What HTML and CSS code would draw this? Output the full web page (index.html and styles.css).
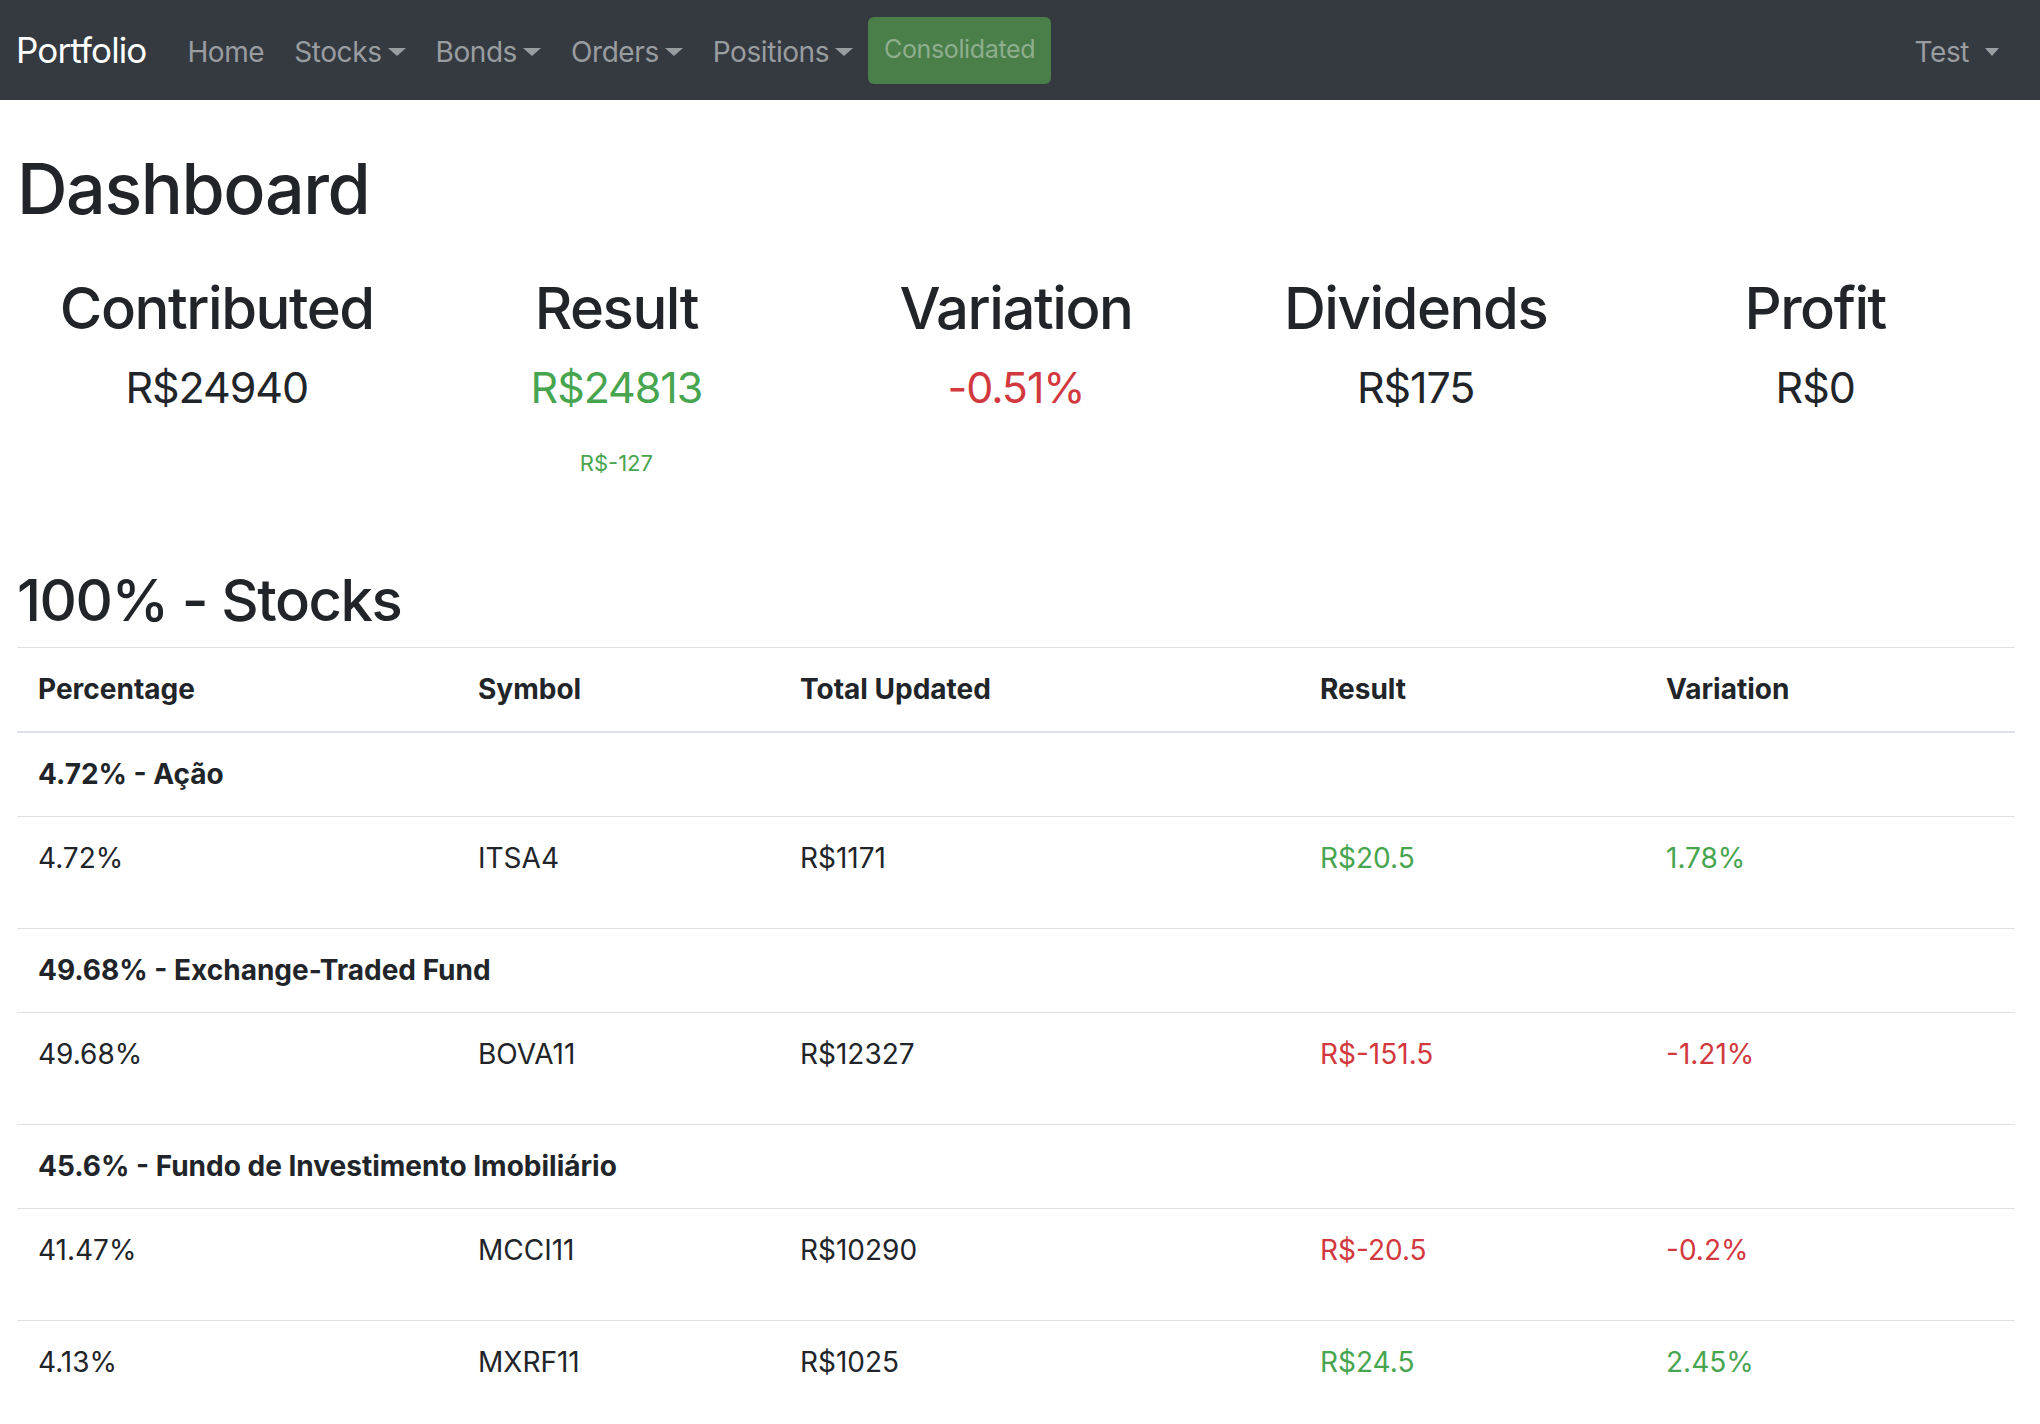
FILE: index.html
```html
<!DOCTYPE html>
<html lang="en">
<head>
<meta charset="utf-8">
<title>Portfolio - Dashboard</title>
<link rel="stylesheet" href="styles.css">
</head>
<body>
<nav class="navbar">
  <a class="brand" href="#">Portfolio</a>
  <ul class="nav">
    <li><a class="nav-link" href="#">Home</a></li>
    <li><a class="nav-link dropdown" href="#">Stocks<span class="caret"></span></a></li>
    <li><a class="nav-link dropdown" href="#">Bonds<span class="caret"></span></a></li>
    <li><a class="nav-link dropdown" href="#">Orders<span class="caret"></span></a></li>
    <li><a class="nav-link dropdown" href="#">Positions<span class="caret"></span></a></li>
    <li><a class="nav-btn" href="#">Consolidated</a></li>
  </ul>
  <div class="nav-right">
    <a class="nav-link dropdown user" href="#">Test<span class="caret"></span></a>
  </div>
</nav>

<main class="main">
  <h1 class="title">Dashboard</h1>

  <section class="stats">
    <div class="stat">
      <h2 class="stat-label">Contributed</h2>
      <div class="stat-value">R$24940</div>
    </div>
    <div class="stat">
      <h2 class="stat-label">Result</h2>
      <div class="stat-value pos">R$24813</div>
      <small class="stat-sub pos">R$-127</small>
    </div>
    <div class="stat">
      <h2 class="stat-label">Variation</h2>
      <div class="stat-value neg">-0.51%</div>
    </div>
    <div class="stat">
      <h2 class="stat-label">Dividends</h2>
      <div class="stat-value">R$175</div>
    </div>
    <div class="stat">
      <h2 class="stat-label">Profit</h2>
      <div class="stat-value">R$0</div>
    </div>
  </section>

  <h3 class="section-title">100% - Stocks</h3>

  <table class="table">
    <colgroup>
      <col class="c-pct">
      <col class="c-sym">
      <col class="c-tot">
      <col class="c-res">
      <col class="c-var">
    </colgroup>
    <thead>
      <tr>
        <th>Percentage</th>
        <th>Symbol</th>
        <th>Total Updated</th>
        <th>Result</th>
        <th>Variation</th>
      </tr>
    </thead>
    <tbody>
      <tr class="group"><td colspan="5">4.72% - Ação</td></tr>
      <tr class="item">
        <td>4.72%</td><td>ITSA4</td><td>R$1171</td><td class="pos">R$20.5</td><td class="pos">1.78%</td>
      </tr>
      <tr class="group"><td colspan="5">49.68% - Exchange-Traded Fund</td></tr>
      <tr class="item">
        <td>49.68%</td><td>BOVA11</td><td>R$12327</td><td class="neg">R$-151.5</td><td class="neg">-1.21%</td>
      </tr>
      <tr class="group"><td colspan="5">45.6% - Fundo de Investimento Imobiliário</td></tr>
      <tr class="item">
        <td>41.47%</td><td>MCCI11</td><td>R$10290</td><td class="neg">R$-20.5</td><td class="neg">-0.2%</td>
      </tr>
      <tr class="item">
        <td>4.13%</td><td>MXRF11</td><td>R$1025</td><td class="pos">R$24.5</td><td class="pos">2.45%</td>
      </tr>
    </tbody>
  </table>
</main>
</body>
</html>
```

FILE: styles.css
```css
* { box-sizing: border-box; }

html, body {
  margin: 0;
  padding: 0;
  background: #ffffff;
}

body {
  font-family: "Inter", "Liberation Sans", sans-serif;
  font-size: 28px;
  line-height: 43px;
  color: #212529;
}

a { text-decoration: none; }

/* ---------- navbar ---------- */
.navbar {
  display: flex;
  align-items: center;
  height: 100px;
  padding: 0 26px 0 16px;
  background: #343a40;
}

.brand {
  font-size: 35px;
  line-height: 50px;
  color: #ffffff;
  letter-spacing: -0.025em;
  margin-right: 26px;
}

.nav {
  display: flex;
  align-items: center;
  list-style: none;
  margin: 0;
  padding: 0;
}

.nav-link {
  display: flex;
  align-items: center;
  padding: 4px 15px 0;
  font-size: 28px;
  line-height: 43px;
  color: #9a9da0;
  letter-spacing: -0.015em;
}

.caret {
  display: inline-block;
  width: 0;
  height: 0;
  margin-left: 6px;
  border-top: 8px solid #9a9da0;
  border-left: 9px solid transparent;
  border-right: 9px solid transparent;
}

.user .caret {
  margin-left: 16px;
  border-left-width: 7.5px;
  border-right-width: 7.5px;
}

.nav-btn {
  display: block;
  margin-left: 0;
  height: 67px;
  padding: 0 16px;
  margin-top: 0;
  font-size: 25px;
  line-height: 64px;
  color: #8fae8d;
  background: #4a7f4a;
  border-radius: 6px;
  letter-spacing: -0.015em;
}

.nav-right {
  margin-left: auto;
  display: flex;
}

/* ---------- main ---------- */
.main {
  padding: 0 25px 0 17px;
}

.title {
  margin: 47px 0 0;
  font-size: 70px;
  line-height: 84px;
  font-weight: 500;
  letter-spacing: -0.02em;
}

.stats {
  display: grid;
  grid-template-columns: repeat(5, 1fr);
  margin-top: 42px;
  text-align: center;
}

.stat {
  display: flex;
  flex-direction: column;
  align-items: center;
}

.stat-label {
  margin: 0;
  font-size: 58px;
  line-height: 70px;
  font-weight: 500;
  letter-spacing: -0.025em;
}

.stat-value {
  margin-top: 18px;
  font-size: 43px;
  line-height: 52px;
  font-weight: 400;
  letter-spacing: -0.025em;
}

.stat-sub {
  margin-top: 33px;
  font-size: 22px;
  line-height: 34px;
}

.section-title {
  margin: 85px 0 0;
  font-size: 58px;
  line-height: 70px;
  font-weight: 500;
  letter-spacing: -0.025em;
}

.pos { color: #48a54f; }
.neg { color: #d2393f; }

/* ---------- table ---------- */
.table {
  width: 100%;
  margin-top: 12px;
  border-collapse: collapse;
  table-layout: fixed;
}

.c-pct { width: 440px; }
.c-sym { width: 322px; }
.c-tot { width: 520px; }
.c-res { width: 346px; }

.table th,
.table td {
  padding: 20px 21px;
  line-height: 43px;
  text-align: left;
  vertical-align: top;
  border-top: 1px solid #dee2e6;
}

.table th {
  font-weight: 700;
}

.table thead th {
  border-bottom: 2px solid #dee2e6;
}

.group td {
  font-weight: 700;
}

.item td {
  padding-bottom: 48px;
}
```
